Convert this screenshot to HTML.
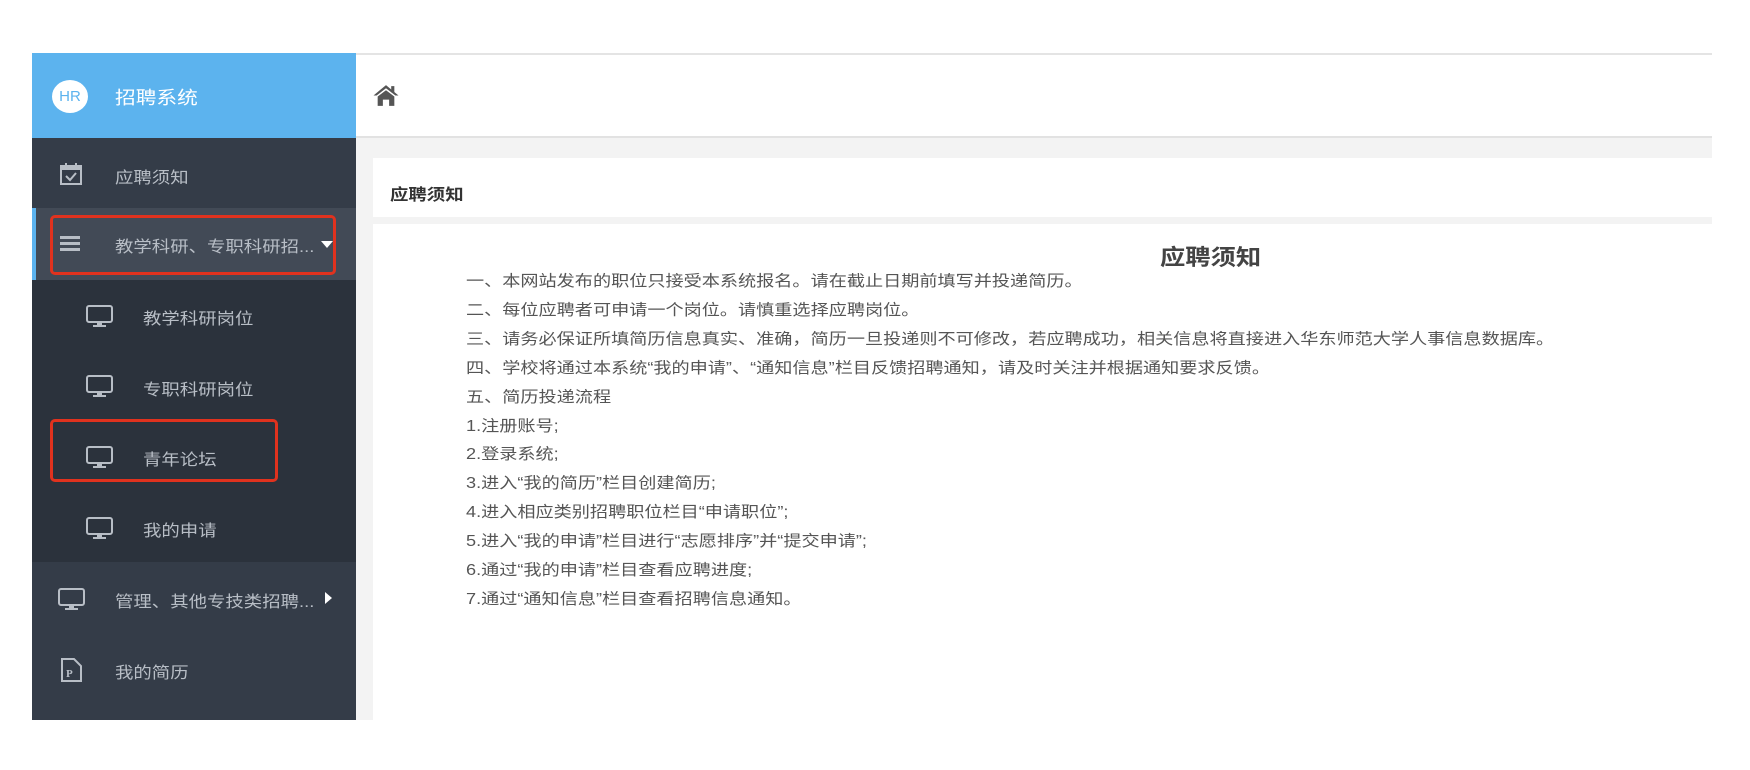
<!DOCTYPE html>
<html><head><meta charset="utf-8"><style>
*{margin:0;padding:0;box-sizing:border-box}
body{width:1750px;height:770px;background:#fff;font-family:"Liberation Sans","Noto Sans CJK SC",sans-serif;position:relative;overflow:hidden}
.abs{position:absolute}
.t{position:absolute;color:#b8bec6;font-size:16px;transform:scaleX(1.15);transform-origin:0 50%;white-space:nowrap}
.side{left:32px;top:53px;width:324px;height:667px;background:#343c48}
.logo{left:32px;top:53px;width:324px;height:85px;background:#5cb3ee}
.sub{left:32px;top:280px;width:324px;height:282px;background:#2b323c}
.main{left:356px;top:138px;width:1356px;height:582px;background:#f3f3f3}
.top{left:356px;top:53px;width:1356px;height:85px;background:#fff;border-top:2px solid #e4e4e4;border-bottom:2px solid #e2e2e2}
.ph{left:373px;top:158px;width:1339px;height:59px;background:#fff}
.pb{left:373px;top:224px;width:1339px;height:496px;background:#fff}
.txt{left:466px;top:268px;color:#555;font-size:15.5px;line-height:28.9px;transform:scaleX(1.17);transform-origin:0 0;white-space:nowrap}
.red{border:3px solid #e0321e;border-radius:5px}
</style></head><body>
<div class="abs side"></div>
<div class="abs logo"></div>
<div class="abs" style="left:52px;top:80px;width:36px;height:33px;border-radius:50%;background:#fff;color:#5cb3ee;font-size:15px;line-height:33px;text-align:center">HR</div>
<div class="t" style="left:115px;top:84px;color:#fff;font-size:18px">招聘系统</div>
<div class="abs sub"></div>
<div class="abs" style="left:32px;top:208px;width:324px;height:72px;background:#424a56;border-left:4px solid #5cb3ee"></div>
<div class="abs top"></div>
<svg class="abs" style="left:371px;top:83px" width="30" height="25" viewBox="0 0 26 24"><path d="M13 2 L1 12 L4 12 L13 5 L22 12 L25 12Z" fill="#555"/><path d="M5 13 L13 7 L21 13 L21 22 L16 22 L16 16 L10 16 L10 22 L5 22Z" fill="#555"/><rect x="18" y="3" width="3" height="6" fill="#555"/></svg>
<div class="abs main"></div>
<div class="abs ph"></div>
<div class="t" style="left:390px;top:181px;font-weight:bold;color:#333">应聘须知</div>
<div class="abs pb"></div>
<div class="t" style="left:1160px;top:240px;font-size:22px;font-weight:bold;color:#444">应聘须知</div>
<div class="abs txt">一、本网站发布的职位只接受本系统报名。请在截止日期前填写并投递简历。<br>二、每位应聘者可申请一个岗位。请慎重选择应聘岗位。<br>三、请务必保证所填简历信息真实、准确，简历一旦投递则不可修改，若应聘成功，相关信息将直接进入华东师范大学人事信息数据库。<br>四、学校将通过本系统“我的申请”、“通知信息”栏目反馈招聘通知，请及时关注并根据通知要求反馈。<br>五、简历投递流程<br>1.注册账号;<br>2.登录系统;<br>3.进入“我的简历”栏目创建简历;<br>4.进入相应类别招聘职位栏目“申请职位”;<br>5.进入“我的申请”栏目进行“志愿排序”并“提交申请”;<br>6.通过“我的申请”栏目查看应聘进度;<br>7.通过“通知信息”栏目查看招聘信息通知。</div>

<svg class="abs" style="left:59px;top:162px" width="24" height="24" viewBox="0 0 24 24"><rect x="2" y="4" width="20" height="18" fill="none" stroke="#b8bec6" stroke-width="2"/><rect x="2" y="4" width="20" height="4" fill="#b8bec6"/><rect x="6" y="1" width="2" height="5" fill="#b8bec6"/><rect x="16" y="1" width="2" height="5" fill="#b8bec6"/><path d="M7 14 L11 18 L17 11" fill="none" stroke="#b8bec6" stroke-width="2"/></svg>
<div class="t" style="left:115px;top:164px">应聘须知</div>

<div class="abs" style="left:60px;top:236px;width:20px;height:3px;background:#b8bec6;box-shadow:0 6px 0 #b8bec6,0 12px 0 #b8bec6"></div>
<div class="t" style="left:115px;top:233px">教学科研、专职科研招...</div>
<div class="abs" style="left:321px;top:241px;width:0;height:0;border-left:6px solid transparent;border-right:6px solid transparent;border-top:7px solid #fff"></div>
<div class="abs red" style="left:50px;top:215px;width:286px;height:60px"></div>

<svg width="0" height="0" style="position:absolute"><defs><g id="mon"><rect x="1" y="1" width="25" height="16" rx="2" fill="none" stroke="#b8bec6" stroke-width="2"/><rect x="11" y="18" width="5" height="2" fill="#b8bec6"/><rect x="7" y="20" width="13" height="2" fill="#b8bec6"/></g></defs></svg>
<svg class="abs" style="left:86px;top:305px" width="28" height="22"><use href="#mon"/></svg>
<div class="t" style="left:143px;top:305px">教学科研岗位</div>
<svg class="abs" style="left:86px;top:375px" width="28" height="22"><use href="#mon"/></svg>
<div class="t" style="left:143px;top:376px">专职科研岗位</div>
<svg class="abs" style="left:86px;top:446px" width="28" height="22"><use href="#mon"/></svg>
<div class="t" style="left:143px;top:446px">青年论坛</div>
<div class="abs red" style="left:50px;top:419px;width:228px;height:63px"></div>
<svg class="abs" style="left:86px;top:517px" width="28" height="22"><use href="#mon"/></svg>
<div class="t" style="left:143px;top:517px">我的申请</div>
<svg class="abs" style="left:58px;top:588px" width="28" height="22"><use href="#mon"/></svg>
<div class="t" style="left:115px;top:588px">管理、其他专技类招聘...</div>
<div class="abs" style="left:325px;top:592px;width:0;height:0;border-top:6px solid transparent;border-bottom:6px solid transparent;border-left:7px solid #fff"></div>
<svg class="abs" style="left:61px;top:658px" width="22" height="24"><path d="M1 1 H13 L20 8 V23 H1Z" fill="none" stroke="#b8bec6" stroke-width="2"/><text x="5" y="19" font-size="11" font-weight="bold" fill="#b8bec6" font-family="Liberation Serif,serif">P</text></svg>
<div class="t" style="left:115px;top:659px">我的简历</div>
</body></html>
